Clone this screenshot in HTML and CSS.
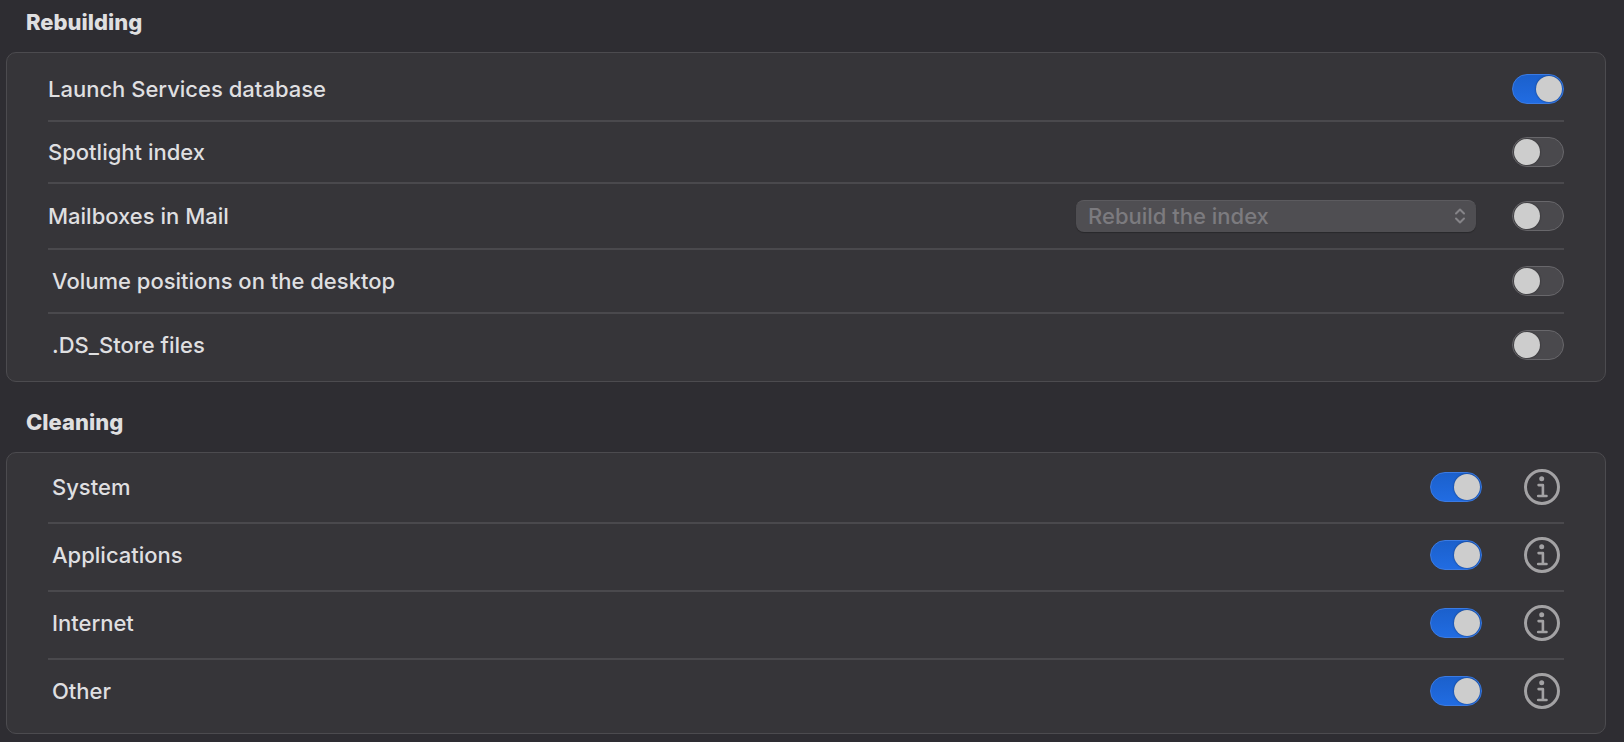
FILE: index.html
```html
<!DOCTYPE html>
<html lang="en">
<head>
<meta charset="utf-8">
<title>Maintenance</title>
<link rel="stylesheet" href="styles.css">
</head>
<body>
<svg class="sprite" aria-hidden="true">
  <symbol id="info" viewBox="0 0 36 36">
    <circle cx="18" cy="18" r="16.5" fill="none" stroke="currentColor" stroke-width="3"/>
    <circle cx="17.7" cy="9.8" r="2.5" fill="currentColor"/>
    <path d="M14.6 16.1H18.9V27M14.2 27H22.5" fill="none" stroke="currentColor" stroke-width="2.6" stroke-linecap="round" stroke-linejoin="round"/>
  </symbol>
</svg>
<main class="page">
  <section class="group">
    <h2 class="group-title">Rebuilding</h2>
    <div class="panel">
      <div class="row">
        <label class="row-label" for="launch">Launch Services database</label>
        <input class="toggle" type="checkbox" role="switch" id="launch" checked>
      </div>
      <div class="row row-short">
        <label class="row-label" for="spotlight">Spotlight index</label>
        <input class="toggle" type="checkbox" role="switch" id="spotlight">
      </div>
      <div class="row row-tall">
        <label class="row-label" for="mail">Mailboxes in Mail</label>
        <div class="popup">
          <select class="popup-select" aria-label="Mailbox action" disabled>
            <option>Rebuild the index</option>
          </select>
          <svg class="popup-arrows" viewBox="0 0 12 18" aria-hidden="true"><path d="M2 6.5L6 2.5L10 6.5M2 11.5L6 15.5L10 11.5"/></svg>
        </div>
        <input class="toggle" type="checkbox" role="switch" id="mail">
      </div>
      <div class="row">
        <label class="row-label row-label-inset" for="volumes">Volume positions on the desktop</label>
        <input class="toggle" type="checkbox" role="switch" id="volumes">
      </div>
      <div class="row">
        <label class="row-label row-label-inset" for="dsstore">.DS_Store files</label>
        <input class="toggle" type="checkbox" role="switch" id="dsstore">
      </div>
    </div>
  </section>
  <section class="group">
    <h2 class="group-title">Cleaning</h2>
    <div class="panel panel-detail">
      <div class="row">
        <label class="row-label row-label-inset" for="system">System</label>
        <input class="toggle" type="checkbox" role="switch" id="system" checked>
        <button class="info" type="button" aria-label="About System"><svg class="info-icon"><use href="#info"/></svg></button>
      </div>
      <div class="row">
        <label class="row-label row-label-inset" for="apps">Applications</label>
        <input class="toggle" type="checkbox" role="switch" id="apps" checked>
        <button class="info" type="button" aria-label="About Applications"><svg class="info-icon"><use href="#info"/></svg></button>
      </div>
      <div class="row">
        <label class="row-label row-label-inset" for="internet">Internet</label>
        <input class="toggle" type="checkbox" role="switch" id="internet" checked>
        <button class="info" type="button" aria-label="About Internet"><svg class="info-icon"><use href="#info"/></svg></button>
      </div>
      <div class="row">
        <label class="row-label row-label-inset" for="other">Other</label>
        <input class="toggle" type="checkbox" role="switch" id="other" checked>
        <button class="info" type="button" aria-label="About Other"><svg class="info-icon"><use href="#info"/></svg></button>
      </div>
    </div>
  </section>
</main>
</body>
</html>
```
FILE: styles.css
```css
* {
  box-sizing: border-box;
}

body {
  margin: 0;
  background: #2e2d32;
  color: #dfdfe0;
  font: 500 22px/28px Inter, "Liberation Sans", sans-serif;
}

.sprite {
  display: none;
}

.page {
  display: flex;
  flex-direction: column;
  gap: 26px;
  padding: 8px 18px 8px 6px;
}

.group-title {
  margin: 0 0 16px;
  padding-left: 20px;
  font-size: 22px;
  font-weight: 800;
}

.panel {
  padding: 5px 41px;
  border: 1px solid #4c4b4f;
  border-radius: 10px;
  background: #363539;
}

.row {
  display: flex;
  align-items: center;
  min-height: 64px;
  border-bottom: 2px solid #4a494d;
}

.row-short {
  min-height: 62px;
}

.row-tall {
  min-height: 66px;
}

.row:last-child {
  min-height: 62px;
  border-bottom: 0;
}

.row-label {
  flex: 1;
  padding-bottom: 1px;
}

.row-label-inset {
  padding-left: 4px;
}

.panel-detail {
  padding-top: 3px;
  padding-bottom: 7px;
}

.panel-detail .row {
  min-height: 68px;
  padding: 0 4px 4px 0;
}

.panel-detail .row:last-child {
  min-height: 66px;
}

.toggle {
  appearance: none;
  display: flex;
  align-items: center;
  width: 52px;
  height: 30px;
  margin: 0;
  padding: 0 1px;
  border: 1px solid #68676b;
  border-radius: 15px;
  background: #4a494d;
}

.toggle::before {
  content: "";
  width: 26px;
  height: 26px;
  border-radius: 50%;
  background: #cdcdcd;
  box-shadow: 0 0 2px #00000080;
}

.toggle:checked {
  justify-content: flex-end;
  border-color: #3b7be3;
  background: linear-gradient(#1b60cc, #216ce2);
}

.popup {
  position: relative;
  flex: 0 1 400px;
  margin-right: 36px;
}

.popup-select {
  appearance: none;
  display: block;
  width: 100%;
  height: 32px;
  margin: 0;
  padding: 0 36px 2px 12px;
  border: 0;
  border-top: 1px solid #5c5b5f;
  border-radius: 8px;
  background: #4f4e52;
  box-shadow: 0 1px 1px #00000040;
  color: #7c7b7f;
  font: inherit;
  opacity: 1;
}

.popup-arrows {
  position: absolute;
  top: 7px;
  right: 10px;
  width: 12px;
  height: 18px;
  fill: none;
  stroke: #858488;
  stroke-width: 2;
  stroke-linecap: round;
  stroke-linejoin: round;
}

.info {
  width: 36px;
  height: 36px;
  margin-left: 42px;
  padding: 0;
  border: 0;
  border-radius: 50%;
  background: none;
  color: #a3a2a4;
}

.info-icon {
  display: block;
  width: 36px;
  height: 36px;
}
```
